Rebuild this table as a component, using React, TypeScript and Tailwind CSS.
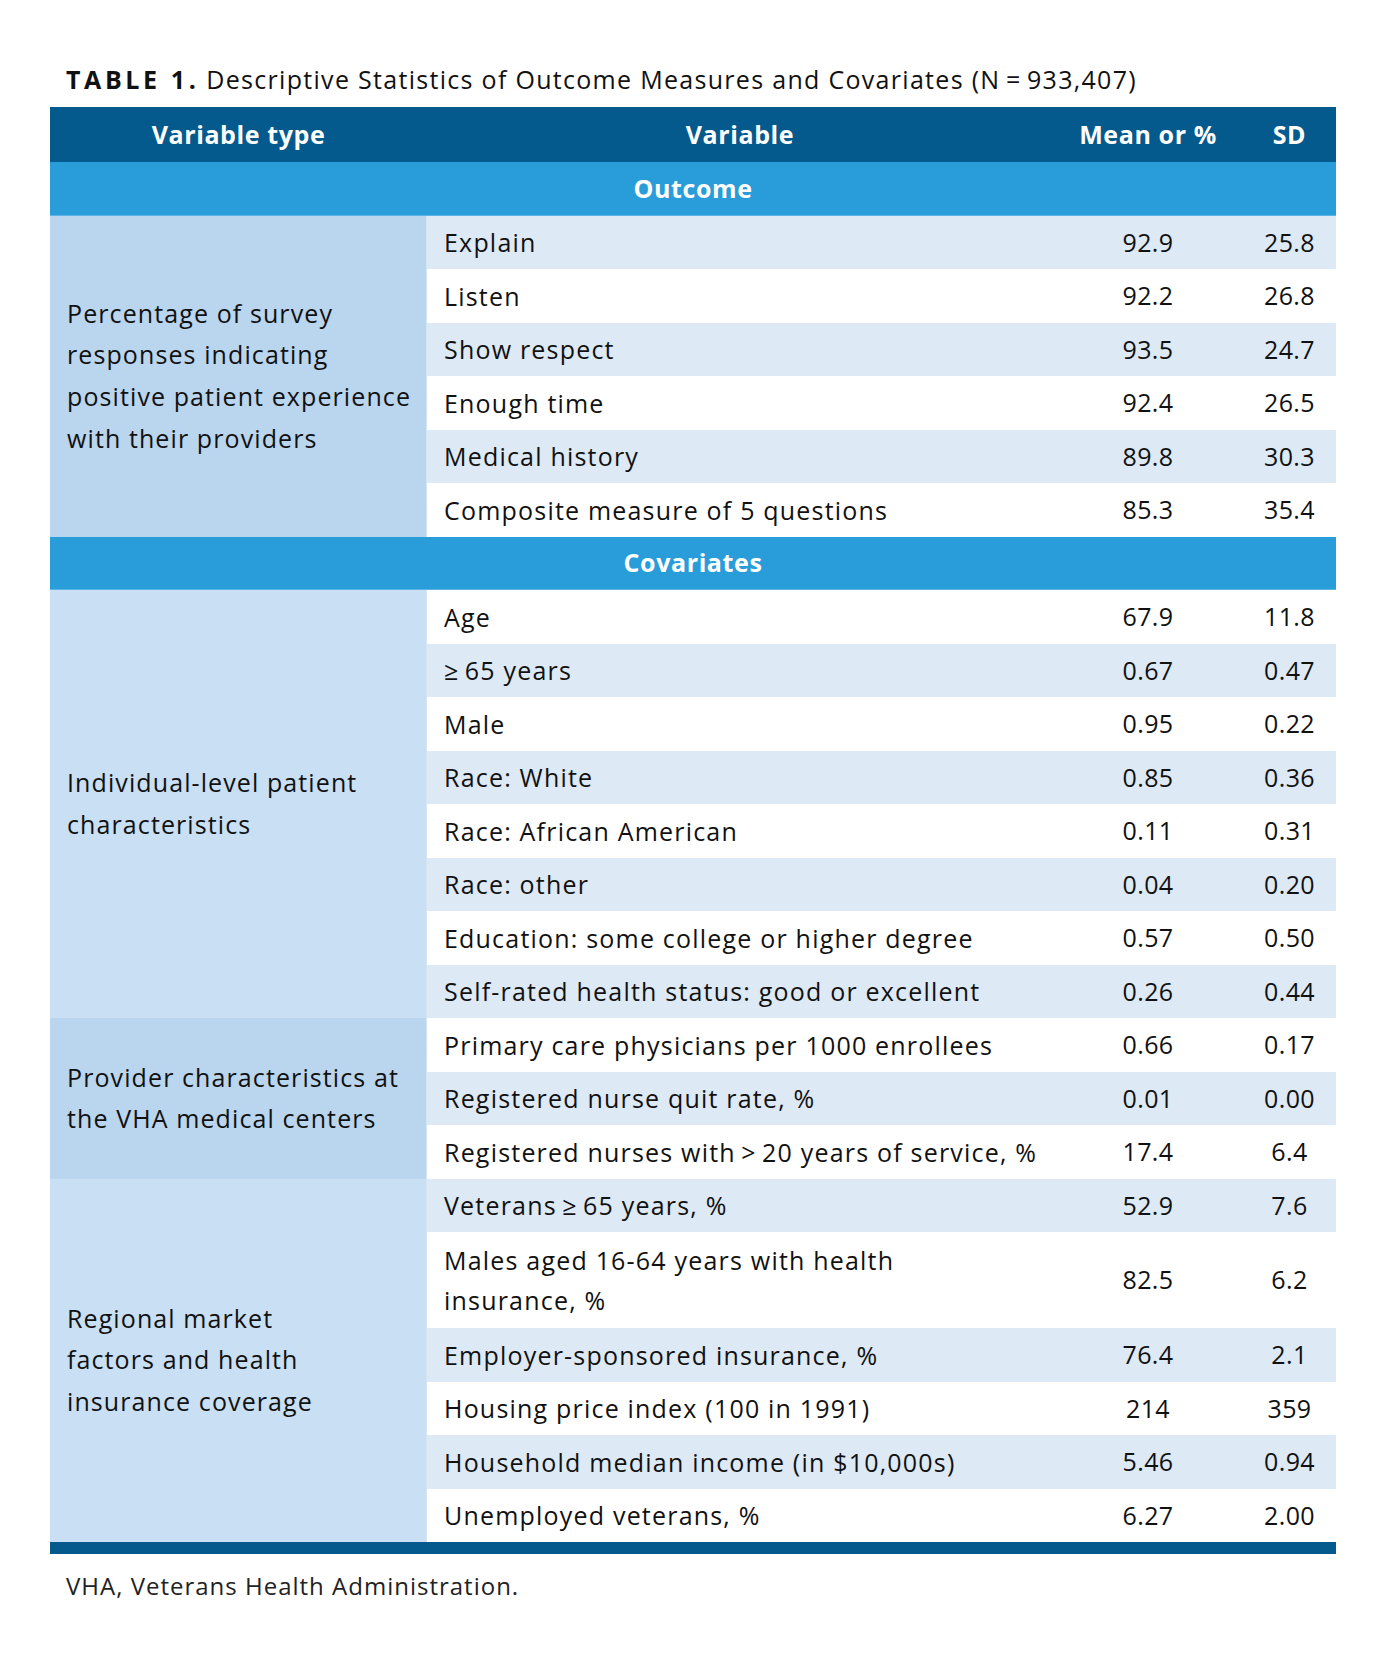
import React from "react";

type Item = { name: string; mean: string; sd: string; tall?: boolean };
type Group = { label: string[]; tone: "dark" | "light"; rows: Item[] };

const outcome: Group = {
    label: ["Percentage of survey", "responses indicating", "positive patient experience", "with their providers"],
    tone: "dark",
    rows: [
        { name: "Explain", mean: "92.9", sd: "25.8" },
        { name: "Listen", mean: "92.2", sd: "26.8" },
        { name: "Show respect", mean: "93.5", sd: "24.7" },
        { name: "Enough time", mean: "92.4", sd: "26.5" },
        { name: "Medical history", mean: "89.8", sd: "30.3" },
        { name: "Composite measure of 5 questions", mean: "85.3", sd: "35.4" },
    ],
};

const covariates: Group[] = [
    {
        label: ["Individual-level patient", "characteristics"],
        tone: "light",
        rows: [
            { name: "Age", mean: "67.9", sd: "11.8" },
            { name: "\u2265\u200965 years", mean: "0.67", sd: "0.47" },
            { name: "Male", mean: "0.95", sd: "0.22" },
            { name: "Race: White", mean: "0.85", sd: "0.36" },
            { name: "Race: African American", mean: "0.11", sd: "0.31" },
            { name: "Race: other", mean: "0.04", sd: "0.20" },
            { name: "Education: some college or higher degree", mean: "0.57", sd: "0.50" },
            { name: "Self-rated health status: good or excellent", mean: "0.26", sd: "0.44" },
        ],
    },
    {
        label: ["Provider characteristics at", "the VHA medical centers"],
        tone: "dark",
        rows: [
            { name: "Primary care physicians per 1000 enrollees", mean: "0.66", sd: "0.17" },
            { name: "Registered nurse quit rate, %", mean: "0.01", sd: "0.00" },
            { name: "Registered nurses with\u2009>\u200920 years of service, %", mean: "17.4", sd: "6.4" },
        ],
    },
    {
        label: ["Regional market", "factors and health", "insurance coverage"],
        tone: "light",
        rows: [
            { name: "Veterans\u2009\u2265\u200965 years, %", mean: "52.9", sd: "7.6" },
            { name: "Males aged 16-64 years with health insurance, %", mean: "82.5", sd: "6.2", tall: true },
            { name: "Employer-sponsored insurance, %", mean: "76.4", sd: "2.1" },
            { name: "Housing price index (100 in 1991)", mean: "214", sd: "359" },
            { name: "Household median income (in $10,000s)", mean: "5.46", sd: "0.94" },
            { name: "Unemployed veterans, %", mean: "6.27", sd: "2.00" },
        ],
    },
];

function SectionBar({ title }: { title: string }) {
    return (
        <div className="col-span-4 flex h-[53.5px] items-center justify-center border-b border-[#5db4e4] bg-[#299dd9] font-bold tracking-[0.6px] text-white">
            {title}
        </div>
    );
}

function GroupRows({ group, startLight }: { group: Group; startLight: boolean }) {
    const span = group.rows.length;
    const spanClass =
        span === 8 ? "row-span-8" : span === 6 ? "row-span-6" : span === 3 ? "row-span-3" : "row-span-1";
    return (
        <>
            <div
                className={`${spanClass} flex flex-col justify-center border-r border-[#d6e5f4] px-[17px] leading-[41.6px] tracking-[1.1px] ${
                    group.tone === "dark" ? "bg-[#bad5ee]" : "bg-[#c9dff3]"
                }`}
            >
                {group.label.map((l) => (
                    <div key={l} className="whitespace-nowrap">{l}</div>
                ))}
            </div>
            {group.rows.map((r, i) => {
                const light = startLight ? i % 2 === 0 : i % 2 === 1;
                const bg = light ? "bg-[#dde9f5]" : "bg-white";
                const h = r.tall ? "h-[96px]" : "h-[53.5px]";
                return (
                    <React.Fragment key={r.name}>
                        <div className={`${bg} ${h} flex items-center px-[17px] leading-[40px] tracking-[1.2px]`}>
                            <span className={r.tall ? "w-[470px]" : "whitespace-nowrap"}>{r.name}</span>
                        </div>
                        <div className={`${bg} ${h} flex items-center justify-center`}>{r.mean}</div>
                        <div className={`${bg} ${h} flex items-center justify-center`}>{r.sd}</div>
                    </React.Fragment>
                );
            })}
        </>
    );
}

export default function App() {
    let covStart = false;
    return (
        <div className="min-h-[1660px] w-[1386px] bg-white px-[50px] pt-[63px] font-['Open_Sans',sans-serif] text-[25px] tracking-[0.4px] text-[#111]">
            <div className="mb-[12px] whitespace-nowrap pl-[16px] leading-[32px]">
                <span className="font-bold tracking-[3.6px]">TABLE 1.</span>{" "}
                <span className="tracking-[1.3px]">Descriptive Statistics of Outcome Measures and Covariates (N{"\u2009=\u2009"}933,407)</span>
            </div>

            <div className="grid w-[1286px] grid-cols-[377px_626px_190px_93px]">
                <div className="flex h-[55px] items-center justify-center bg-[#045a8d] font-bold tracking-[0.6px] text-white">Variable type</div>
                <div className="flex h-[55px] items-center justify-center bg-[#045a8d] font-bold tracking-[0.6px] text-white">Variable</div>
                <div className="flex h-[55px] items-center justify-center bg-[#045a8d] font-bold tracking-[0.6px] text-white">Mean or %</div>
                <div className="flex h-[55px] items-center justify-center bg-[#045a8d] font-bold tracking-[0.6px] text-white">SD</div>

                <SectionBar title="Outcome" />
                <GroupRows group={outcome} startLight={true} />

                <SectionBar title="Covariates" />
                {covariates.map((g) => {
                    const el = <GroupRows key={g.label[0]} group={g} startLight={covStart} />;
                    if (g.rows.length % 2 === 1) covStart = !covStart;
                    return el;
                })}

                <div className="col-span-4 h-[12px] bg-[#045a8d]" />
            </div>

            <div className="mt-[14px] pl-[16px] text-[24px] tracking-[1px] text-[#222]">VHA, Veterans Health Administration.</div>
        </div>
    );
}
